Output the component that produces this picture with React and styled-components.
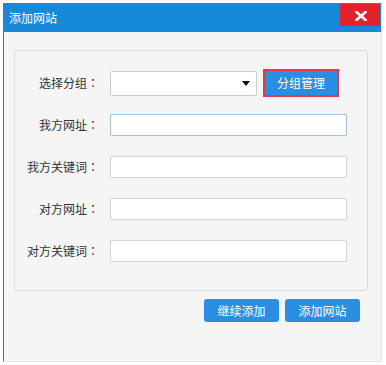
import React from "react";
import styled, { createGlobalStyle } from "styled-components";

const Global = createGlobalStyle`
  html, body { margin: 0; padding: 0; background: #ffffff; }
  body { font-family: "Noto Sans CJK SC", "Noto Sans", sans-serif; }
  * { box-sizing: border-box; }
`;

const Page = styled.div`
  padding: 3px 0 0 3px;
  width: 386px;
  height: 365px;
`;

const Window = styled.div`
  width: 379px;
  height: 359px;
  background: #f5f5f5;
  border-left: 1px solid #1a84cc;
  border-right: 1px solid #e6e6e6;
  border-bottom: 1px solid #e6e6e6;
  display: flex;
  flex-direction: column;
`;

const TitleBar = styled.div`
  height: 29px;
  margin-left: -1px;
  background: #168ad8;
  display: flex;
  align-items: flex-start;
  justify-content: space-between;
`;

const Title = styled.div`
  color: #ffffff;
  font-size: 12px;
  line-height: 16px;
  padding: 7px 0 0 6px;
`;

const CloseButton = styled.div`
  width: 40px;
  height: 22px;
  margin: 1px 1px 0 0;
  background: #e3222c;
  display: flex;
  align-items: center;
  justify-content: center;
  padding: 2px 0 0 2px;
`;

const Panel = styled.div`
  margin: 18px 13px 0 10px;
  height: 241px;
  border: 1px solid #dcdcdc;
  border-radius: 3px;
  background: #f5f5f5;
  padding: 18px 0 0 0;
  display: flex;
  flex-direction: column;
  gap: 14px;
`;

const Row = styled.div`
  display: flex;
  align-items: center;
  height: 28px;
`;

const Label = styled.div`
  width: 84px;
  text-align: right;
  font-size: 12px;
  line-height: 16px;
  color: #333333;
  margin-right: 11px;
  white-space: nowrap;
`;

const Colon = styled.span`
  font-family: "Noto Sans CJK TC", "Noto Sans CJK SC", sans-serif;
`;

const Input = styled.div`
  width: 237px;
  height: 22px;
  background: #ffffff;
  border: 1px solid ${(p) => (p.$focused ? "#a6c3d9" : "#d3d3d3")};
  border-radius: 1px;
`;

const Select = styled.div`
  width: 147px;
  height: 25px;
  background: #ffffff;
  border: 1px solid #cccccc;
  border-radius: 2px;
  display: flex;
  align-items: center;
  justify-content: flex-end;
  padding-right: 6px;
`;

const Arrow = styled.div`
  width: 0;
  height: 0;
  border-left: 4px solid transparent;
  border-right: 4px solid transparent;
  border-top: 5px solid #111111;
`;

const ManageButton = styled.div`
  margin-left: 6px;
  width: 76px;
  height: 28px;
  border: 2px solid #e23a40;
  background: #2a8ee3;
  color: #ffffff;
  font-size: 12px;
  line-height: 24px;
  text-align: center;
`;

const Actions = styled.div`
  display: flex;
  justify-content: flex-end;
  gap: 6px;
  margin: 8px 21px 0 0;
`;

const ActionButton = styled.div`
  width: 75px;
  height: 23px;
  border-radius: 3px;
  background: #2a8ee3;
  color: #ffffff;
  font-size: 12px;
  line-height: 23px;
  text-align: center;
`;

const fields = [
  { label: "我方网址", focused: true },
  { label: "我方关键词" },
  { label: "对方网址" },
  { label: "对方关键词" },
];

export default function App() {
  return (
    <>
      <Global />
      <Page>
        <Window>
          <TitleBar>
            <Title>添加网站</Title>
            <CloseButton>
              <svg width="12" height="10" viewBox="0 0 12 10">
                <path d="M1.5 1 L10.5 9 M10.5 1 L1.5 9" stroke="#ffffff" strokeWidth="2.6" strokeLinecap="square" />
              </svg>
            </CloseButton>
          </TitleBar>
          <Panel>
            <Row>
              <Label>
                选择分组<Colon>：</Colon>
              </Label>
              <Select>
                <Arrow />
              </Select>
              <ManageButton>分组管理</ManageButton>
            </Row>
            {fields.map((f) => (
              <Row key={f.label}>
                <Label>
                  {f.label}
                  <Colon>：</Colon>
                </Label>
                <Input $focused={f.focused} />
              </Row>
            ))}
          </Panel>
          <Actions>
            <ActionButton>继续添加</ActionButton>
            <ActionButton>添加网站</ActionButton>
          </Actions>
        </Window>
      </Page>
    </>
  );
}
